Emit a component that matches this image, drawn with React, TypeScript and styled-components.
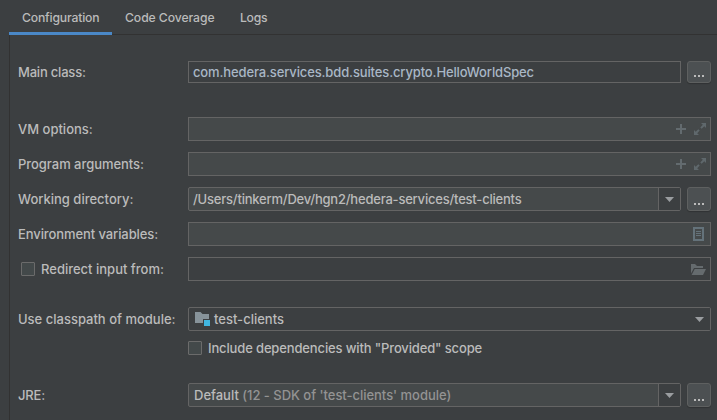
import React from "react";
import styled, { createGlobalStyle } from "styled-components";

const Global = createGlobalStyle`
  * { box-sizing: border-box; }
  body {
    margin: 0;
    background: #3c3f41;
    color: #bbbbbb;
    font: 500 13px/16px Inter, sans-serif;
    overflow: hidden;
  }
`;

const Window = styled.div`
  width: 717px;
  height: 420px;
  padding-left: 9px;
  display: flex;
  flex-direction: column;
  background: #3c3f41;
`;

const TabBar = styled.div`
  display: flex;
  height: 35px;
  font-size: 12.2px;
  box-shadow: inset 0 -1px #323232;
`;

const Tab = styled.div<{ $active?: boolean; $width: number }>`
  width: ${(p) => p.$width}px;
  padding: 10px 0 0 13px;
  border-bottom: 3px solid ${(p) => (p.$active ? "#4a88c7" : "transparent")};
`;

const Panel = styled.div`
  flex: 1;
  display: flex;
  flex-direction: column;
  padding: 26px 6px 0 8px;
  border-left: 1px solid #323232;
`;

const Row = styled.div<{ $gap: number; $height?: number }>`
  display: grid;
  grid-template-columns: 170px 1fr;
  align-items: center;
  height: ${(p) => p.$height ?? 24}px;
  margin-bottom: ${(p) => p.$gap}px;
`;

const Controls = styled.div`
  display: flex;
  height: 100%;
  align-items: center;
  gap: 6px;
`;

const Text = styled.span<{ $track?: number; $tone?: string }>`
  display: inline-block;
  white-space: pre;
  letter-spacing: ${(p) => p.$track ?? 0}px;
  color: ${(p) => p.$tone ?? "inherit"};
`;

const Field = styled.div<{ $filled?: boolean; $pad?: number; $round?: boolean }>`
  flex: 1;
  height: 100%;
  display: flex;
  align-items: center;
  padding-left: ${(p) => p.$pad ?? 4}px;
  border: 1px solid #646464;
  border-radius: ${(p) => (p.$round ? 2 : 0)}px;
  background: ${(p) => (p.$filled ? "#45494a" : "transparent")};
`;

const Trailing = styled.div<{ $right: number; $gap?: number }>`
  display: flex;
  align-items: center;
  gap: ${(p) => p.$gap ?? 0}px;
  margin-left: auto;
  padding-right: ${(p) => p.$right}px;
`;

const DropButton = styled.div<{ $split?: boolean }>`
  width: 22px;
  height: 100%;
  margin-left: auto;
  display: flex;
  align-items: center;
  justify-content: center;
  border-left: 1px solid ${(p) => (p.$split ? "#646464" : "transparent")};
  background: #3c3f41;
`;

const Browse = styled.div`
  width: 24px;
  height: 100%;
  display: flex;
  align-items: flex-end;
  justify-content: center;
  padding-bottom: 5px;
  border: 1px solid #5e6060;
  border-radius: 3px;
  background: #4c5052;
  box-shadow: 0 1px 1px rgba(0, 0, 0, 0.2);
`;

const CheckLine = styled.div<{ $indent?: number; $gap: number }>`
  display: flex;
  align-items: center;
  height: 14px;
  line-height: 14px;
  gap: ${(p) => p.$gap}px;
  padding-left: ${(p) => p.$indent ?? 0}px;
`;

const CheckBox = styled.div`
  width: 14px;
  height: 14px;
  border: 1px solid #6b6b6b;
  border-radius: 1px;
  background: #43494a;
`;

const ModuleIcon = styled.svg`
  margin-right: 3px;
`;

const Ellipsis = () => (
  <Browse>
    <svg width="10" height="2" fill="#bbbbbb">
      <path d="M0 0h2v2H0zM4 0h2v2H4zM8 0h2v2H8z" />
    </svg>
  </Browse>
);

const Arrow = ({ split }: { split?: boolean }) => (
  <DropButton $split={split}>
    <svg width="9" height="5" fill="#9a9da0">
      <path d="M0 0h9L4.5 5z" />
    </svg>
  </DropButton>
);

const InputActions = () => (
  <Trailing $right={4} $gap={8}>
    <svg width="10" height="10" fill="#636b6f">
      <path d="M4 0h2v4h4v2H6v4H4V6H0V4h4z" />
    </svg>
    <svg width="12" height="12" fill="#5f686c">
      <path d="M7 0h5v5l-1.7-1.7-2.6 2.5-1.4-1.4 2.5-2.6zM0 7l1.7 1.7 2.6-2.5 1.4 1.4-2.5 2.6L5 12H0z" />
    </svg>
  </Trailing>
);

export default function App() {
  return (
    <Window>
      <Global />
      <TabBar>
        <Tab $active $width={103}><Text $track={-0.18}>Configuration</Text></Tab>
        <Tab $width={115}><Text $track={-0.08}>Code Coverage</Text></Tab>
        <Tab $width={53}><Text $track={-0.3}>Logs</Text></Tab>
      </TabBar>
      <Panel>
        <Row $gap={34} $height={22}>
          <Text $track={-0.2}>Main class:</Text>
          <Controls>
            <Field><Text $tone="#a9b7c6" $track={-0.13}>com.hedera.services.bdd.suites.crypto.HelloWorldSpec</Text></Field>
            <Ellipsis />
          </Controls>
        </Row>
        <Row $gap={11}>
          <Text>VM options:</Text>
          <Controls><Field $filled><InputActions /></Field></Controls>
        </Row>
        <Row $gap={11}>
          <Text $track={-0.04}>Program arguments:</Text>
          <Controls><Field $filled><InputActions /></Field></Controls>
        </Row>
        <Row $gap={11}>
          <Text>Working directory:</Text>
          <Controls>
            <Field $filled $round>
              <Text $track={-0.21}>/Users/tinkerm/Dev/hgn2/hedera-services/test-clients</Text>
              <Arrow split />
            </Field>
            <Ellipsis />
          </Controls>
        </Row>
        <Row $gap={11}>
          <Text $track={-0.09}>Environment variables:</Text>
          <Controls>
            <Field $filled>
              <Trailing $right={6}>
                <svg width="11" height="14" fill="#64727a">
                  <path fillRule="evenodd" d="M0 0h11v14H0zM2 2v10h7V2z" />
                  <path d="M3 4h5v1H3zM3 6h5v1H3zM3 8h5v1H3z" />
                </svg>
              </Trailing>
            </Field>
          </Controls>
        </Row>
        <Row $gap={26}>
          <CheckLine $indent={3} $gap={6}>
            <CheckBox />
            <Text>Redirect input from:</Text>
          </CheckLine>
          <Controls>
            <Field>
              <Trailing $right={4}>
                <svg width="15" height="11" fill="#656b6e">
                  <path d="M0 0h4l2 2h6v2H3L0 9.500z" />
                  <path d="M3.700 5H15l-3 6H.600z" />
                </svg>
              </Trailing>
            </Field>
          </Controls>
        </Row>
        <Row $gap={10}>
          <Text>Use classpath of module:</Text>
          <Controls>
            <Field $pad={6} $round>
              <ModuleIcon width="16" height="14">
                <path fill="#87939a" d="M0 0h5.500l2 2H14v5H8v4H0z" />
                <path fill="#40b6e0" d="M9 8h6v6H9z" />
              </ModuleIcon>
              <Text>test-clients</Text>
              <Arrow />
            </Field>
          </Controls>
        </Row>
        <Row $gap={28} $height={14}>
          <span />
          <CheckLine $gap={6}>
            <CheckBox />
            <Text $track={-0.14}>Include dependencies with "Provided" scope</Text>
          </CheckLine>
        </Row>
        <Row $gap={0}>
          <Text $track={-0.2}>JRE:</Text>
          <Controls>
            <Field $filled $round $pad={5}>
              <Text>Default </Text>
              <Text $tone="#939393" $track={-0.03}>(12 - SDK of 'test-clients' module)</Text>
              <Arrow split />
            </Field>
            <Ellipsis />
          </Controls>
        </Row>
      </Panel>
    </Window>
  );
}
